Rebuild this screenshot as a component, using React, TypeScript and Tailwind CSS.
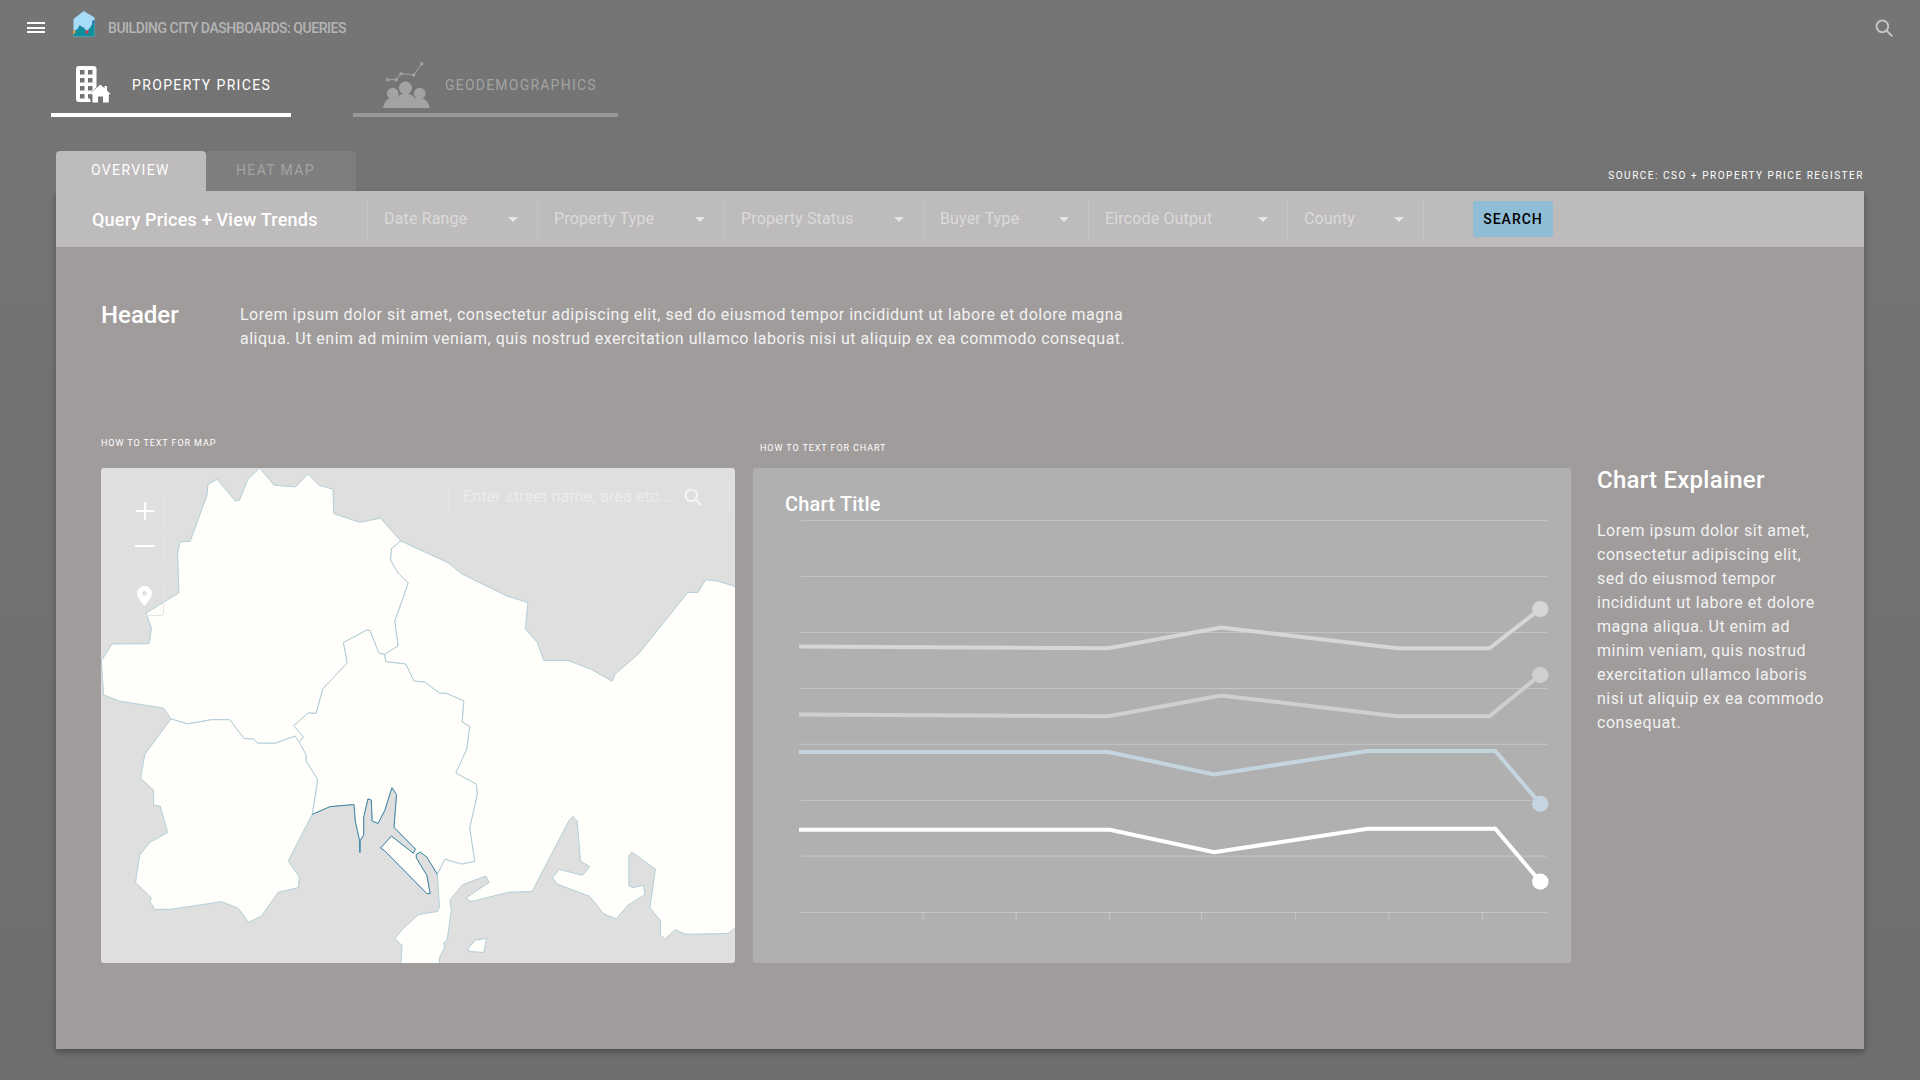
const filters = [
  { label: "Date Range", width: "w-[170px]" },
  { label: "Property Type", width: "w-[187px]" },
  { label: "Property Status", width: "w-[199px]" },
  { label: "Buyer Type", width: "w-[165px]" },
  { label: "Eircode Output", width: "w-[199px]" },
  { label: "County", width: "w-[136px]" },
];

const explainer =
  "Lorem ipsum dolor sit amet, consectetur adipiscing elit, sed do eiusmod tempor incididunt ut labore et dolore magna aliqua. Ut enim ad minim veniam, quis nostrud exercitation ullamco laboris nisi ut aliquip ex ea commodo consequat.";

const landNorth =
  "403,108 437,157 488,162 517,125 545,158 577,168 579,238 640,263 690,251 738,316 716,338 714,372 732,408 756,436 724,545 732,615 700,640 686,636 665,572 658,570 602,606 611,664 553,738 537,808 518,807 484,843 507,875 497,890 487,873 440,893 398,893 388,881 366,880 332,826 288,826 232,838 192,824 175,793 70,773 32,755 27,658 52,610 140,609 146,566 133,522 211,464 208,350 214,318 238,317 278,185 280,155 302,140 345,202 355,200 375,140";
const landSouthWest =
  "192,824 232,838 288,826 332,826 366,880 388,881 398,893 440,893 487,873 497,890 513,925 514,945 541,997 528,1096 500,1160 471,1229 497,1275 495,1305 447,1318 408,1385 377,1404 352,1364 313,1345 190,1367 154,1367 142,1345 146,1335 108,1290 118,1212 142,1176 184,1148 167,1073 151,1070 151,1027 120,993 130,925";
const harbour =
  "528,1096 570,1074 627,1068 630,1115 640,1170 641,1205 642,1170 650,1155 650,1105 660,1052 668,1055 670,1115 684,1122 700,1085 717,1020 728,1040 722,1133 773,1195 768,1207 716,1158 690,1192 700,1200 800,1322 808,1322 800,1270 775,1220 775,1210 785,1204 800,1218 825,1267";
const landCentre =
  "602,606 658,570 665,572 686,636 700,640 702,660 750,667 770,716 795,718 830,750 845,750 888,772 884,832 902,845 895,910 869,978 918,1010 920,1040 902,1135 914,1230 882,1238 843,1224 825,1267 800,1218 785,1204 775,1210 775,1220 800,1270 808,1322 800,1322 700,1200 690,1192 716,1158 768,1207 773,1195 722,1133 728,1040 717,1020 700,1085 684,1122 670,1115 668,1055 660,1052 650,1105 650,1155 642,1170 641,1205 640,1170 630,1115 627,1068 570,1074 528,1096 541,997 514,945 513,925 497,890 507,875 484,843 518,807 537,808 553,738 611,664";
const landEast =
  "738,316 850,378 883,410 990,473 1040,492 1034,567 1062,605 1078,657 1135,657 1190,682 1240,716 1248,695 1303,638 1420,463 1444,463 1462,427 1490,430 1532,446 1540,446 1540,1420 1532,1420 1515,1436 1415,1438 1390,1425 1365,1452 1355,1440 1355,1400 1330,1362 1343,1252 1287,1204 1280,1215 1280,1300 1290,1305 1315,1298 1318,1325 1278,1355 1250,1394 1220,1380 1187,1330 1110,1295 1098,1277 1115,1253 1170,1270 1187,1245 1165,1230 1157,1115 1147,1102 1137,1115 1050,1316 995,1318 905,1345 892,1335 948,1290 940,1272 885,1297 855,1340 858,1370 848,1455 840,1462 842,1475 830,1505 830,1530 738,1530 741,1470 724,1450 745,1420 780,1382 825,1373 830,1360 825,1267 843,1224 882,1238 914,1230 902,1135 920,1040 918,1010 869,978 895,910 902,845 884,832 888,772 845,750 830,750 795,718 770,716 750,667 702,660 700,640 732,615 724,545 756,436 732,408 714,372 716,338";
const island = "915,1455 942,1450 935,1490 900,1487 898,1478";

const gridRows = [258, 417, 577, 737, 896, 1056, 1215, 1376];
const ticks = [327, 503, 679, 853, 1031, 1207, 1384];
const series = [
  { color: "#d6d6d6", points: "93,617 677,622 890,563 1222,622 1397,622 1493,510", cy: 510 },
  { color: "#cfcfcf", points: "93,811 677,816 890,757 1222,816 1397,816 1493,698", cy: 698 },
  { color: "#c5d5df", points: "93,918 677,918 877,982 1167,915 1408,915 1493,1066", cy: 1066 },
  { color: "#ffffff", points: "93,1140 680,1140 877,1204 1167,1137 1408,1137 1493,1288", cy: 1288 },
];

function Logo() {
  return (
    <svg width="22" height="26" viewBox="0 0 22 26">
      <path d="M10.7 0 L21.5 6.5 L21.5 25.5 L0.5 25.5 L0.5 8 Z" fill="#a6dcf8" />
      <path d="M0.5 25.5 L0.5 20.5 Q4.5 19.5 6.7 15.5 Q10.5 15.5 14 20.7 Q18 17 20.7 10.7 L21.5 10.7 L21.5 25.5 Z" fill="#0f8f9e" />
      <path d="M0.5 20.5 Q4.5 19.5 6.7 15.5 Q10.5 15.5 14 20.7 Q18 17 20.7 10.7" fill="none" stroke="#2b7fa8" strokeWidth="0.8" />
      <circle cx="6.9" cy="15.8" r="1.3" fill="#2b7fa8" />
      <circle cx="0.9" cy="21" r="1.6" fill="#f0a92c" />
      <circle cx="14" cy="21" r="1.7" fill="#d8344f" />
      <circle cx="20.5" cy="10.7" r="1.5" fill="#2a6fb5" />
    </svg>
  );
}

function BuildingIcon() {
  return (
    <svg width="35" height="37" viewBox="0 0 35 37">
      <rect x="0" y="0" width="20.5" height="36" rx="3" fill="#ffffff" />
      {[4, 12, 20, 28].map((y) =>
        [4, 12].map((x) => <rect key={`${x}-${y}`} x={x} y={y} width="4.5" height="4.5" fill="#737373" />),
      )}
      <path d="M24.5 17 L36 29 L33.5 37 L15 37 L13 29 Z" fill="#737373" />
      <path d="M24.3 18.5 L28.5 22.3 L28.5 20 L31 20 L31 24.6 L34.8 28.3 L32.8 28.3 L32.8 36.5 L27 36.5 L27 30.5 L22 30.5 L22 36.5 L16.5 36.5 L16.5 28.3 L13.6 28.3 Z" fill="#ffffff" />
    </svg>
  );
}

function GeoIcon() {
  return (
    <svg width="47" height="46" viewBox="0 0 47 46" fill="#a3a3a3">
      <polyline points="4.7,17.7 13.3,17.7 18,11.7 30.7,13 38.7,1.7" fill="none" stroke="#a3a3a3" strokeWidth="1" />
      {[
        [4.7, 17.7],
        [13.3, 17.7],
        [18, 11.7],
        [30.7, 13],
        [38.7, 1.7],
      ].map(([cx, cy]) => (
        <circle key={cx} cx={cx} cy={cy} r="1.7" />
      ))}
      <circle cx="9.7" cy="31.5" r="5.8" />
      <circle cx="36.7" cy="31.5" r="5.8" />
      <circle cx="22.5" cy="26" r="6.5" />
      <path d="M0 46 Q1.5 37 9 35.5 L14 36 Q16 31.5 22.5 31.5 Q29 31.5 31.5 36 L37 35.5 Q45 37 46.7 46 Z" />
    </svg>
  );
}

function SearchGlyph({ size, color }: { size: number; color: string }) {
  return (
    <svg width={size} height={size} viewBox="0 0 24 24" fill="none" stroke={color} strokeWidth="2.4">
      <circle cx="10" cy="10" r="7" />
      <path d="M15 15 L22 22" />
    </svg>
  );
}

function MapPanel() {
  return (
    <div className="relative h-[495px] w-[634px] overflow-hidden rounded-[3px] bg-[#dfdfdf]">
      <svg className="block h-full w-full" viewBox="26 108 1506 1412" preserveAspectRatio="none">
        {[landNorth, landSouthWest, landCentre, landEast, island].map((points) => (
          <polygon
            key={points.slice(0, 20)}
            points={points}
            fill="#fffefa"
            stroke="#b3ced9"
            strokeWidth="1"
            strokeLinejoin="round"
            vectorEffect="non-scaling-stroke"
          />
        ))}
        <polyline
          points={harbour}
          fill="none"
          stroke="#3f88a4"
          strokeWidth="1"
          strokeLinejoin="round"
          vectorEffect="non-scaling-stroke"
        />
      </svg>

      {/* Map controls */}
      <div className="absolute left-[24px] top-[24px] flex w-[39px] flex-col gap-[13px]">
        <div className="flex h-[71px] flex-col rounded-[3px] border border-[#e3e3e3]">
          <div className="flex h-[36px] items-center justify-center border-b border-[#e3e3e3]">
            <svg width="20" height="20" viewBox="0 0 20 20" stroke="#ffffff" strokeWidth="2">
              <path d="M10 1 V19 M1 10 H19" />
            </svg>
          </div>
          <div className="flex flex-1 items-center justify-center">
            <div className="h-[2px] w-[20px] bg-white" />
          </div>
        </div>
        <div className="flex h-[40px] items-center justify-center rounded-[3px] border border-[#e3e3e3]">
          <svg width="15" height="20" viewBox="0 0 15 20">
            <path
              fillRule="evenodd"
              d="M7.5 0 C3.4 0 0 3.3 0 7.3 C0 12 7.5 20 7.5 20 C7.5 20 15 12 15 7.3 C15 3.3 11.6 0 7.5 0 Z M7.5 5 A2.3 2.3 0 1 1 7.5 9.6 A2.3 2.3 0 1 1 7.5 5 Z"
              fill="#ffffff"
            />
          </svg>
        </div>
      </div>

      <div className="absolute left-[347px] top-[14px] flex h-[32px] w-[281px] items-center border border-[#e3e3e3] pl-[14px] pb-[2px]">
        <span className="text-[16px] tracking-[0.2px] text-[#ececec]">Enter street name, area etc...</span>
        <span className="ml-[11px] flex">
          <SearchGlyph size={20} color="#f4f4f4" />
        </span>
      </div>
    </div>
  );
}

function ChartPanel() {
  return (
    <div className="flex h-[495px] w-[818px] flex-col rounded-[3px] bg-[#b0b0b0]">
      <h3 className="pl-[32px] pt-[23px] pb-[1px] text-[20px] font-medium leading-[27px] tracking-[0.2px] text-white">Chart Title</h3>
      <svg className="block h-[444px] w-full" viewBox="6 253.4 1545 1266.6" preserveAspectRatio="none">
        {gridRows.map((y) => (
          <line key={y} x1="96" x2="1506" y1={y} y2={y} stroke="#c6c6c6" strokeWidth="1" vectorEffect="non-scaling-stroke" />
        ))}
        {ticks.map((x) => (
          <line key={x} x1={x} x2={x} y1="1376" y2="1398" stroke="#c6c6c6" strokeWidth="1" vectorEffect="non-scaling-stroke" />
        ))}
        {series.map((s) => (
          <g key={s.cy}>
            <polyline points={s.points} fill="none" stroke={s.color} strokeWidth="4" vectorEffect="non-scaling-stroke" />
            <ellipse cx="1493" cy={s.cy} rx="15.5" ry="23" fill={s.color} />
          </g>
        ))}
      </svg>
    </div>
  );
}

export default function App() {
  return (
    <div className="h-[1080px] w-[1920px] overflow-hidden bg-gradient-to-b from-[#757575] to-[#6e6e6e] font-[Roboto,sans-serif]">
      {/* Top bar */}
      <div className="flex h-[45px] items-center pl-[27px] pr-[26px] pt-[10px]">
        <div className="flex w-[18px] flex-col gap-[2.5px]">
          <div className="h-[2px] bg-white" />
          <div className="h-[2px] bg-white" />
          <div className="h-[2px] bg-white" />
        </div>
        <div className="ml-[28px] mb-[8px] flex">
          <Logo />
        </div>
        <span className="ml-[13px] mt-[1px] text-[14px] font-medium tracking-[-0.45px] text-[#b5b5b5]">
          BUILDING CITY DASHBOARDS: QUERIES
        </span>
        <div className="ml-auto flex">
          <SearchGlyph size={20} color="#c4c4c4" />
        </div>
      </div>

      {/* Section tabs */}
      <div className="flex h-[72px] pl-[51px]">
        <div className="flex w-[240px] items-center border-b-4 border-white pl-[25px] pt-[12px]">
          <div className="flex pb-[2px]">
            <BuildingIcon />
          </div>
          <span className="ml-[21px] text-[14px] tracking-[1.35px] text-white">PROPERTY PRICES</span>
        </div>
        <div className="ml-[62px] flex w-[265px] items-center border-b-4 border-[#999999] pl-[30px] pt-[12px]">
          <GeoIcon />
          <span className="ml-[15px] text-[14px] tracking-[1.22px] text-[#a3a3a3]">GEODEMOGRAPHICS</span>
        </div>
      </div>

      <div className="px-[56px] pt-[34px]">
        {/* Sub tabs and source */}
        <div className="flex items-end">
          <div className="flex h-[40px] w-[150px] items-center rounded-t-[4px] bg-[#bdbbbb] pb-[1px] pl-[35px] text-[14px] tracking-[1.35px] text-white">
            OVERVIEW
          </div>
          <div className="flex h-[40px] w-[150px] items-center rounded-t-[4px] bg-[#7e7e7e] pb-[1px] pl-[30px] text-[14px] tracking-[1.35px] text-[#a3a3a3]">
            HEAT MAP
          </div>
          <span className="ml-auto mb-[9px] text-[10px] leading-[12px] tracking-[1.53px] text-white">
            SOURCE: CSO + PROPERTY PRICE REGISTER
          </span>
        </div>

        <div className="shadow-[0_3px_6px_rgba(0,0,0,0.3)]">
          {/* Filter bar */}
          <div className="flex h-[56px] items-center bg-[#bdbbbb] pl-[36px]">
            <span className="w-[275px] text-[18px] font-medium tracking-[0.2px] text-white">Query Prices + View Trends</span>
            <div className="flex h-[44px] border-l border-[#c6c4c4]">
              {filters.map((f) => (
                <div
                  key={f.label}
                  className={`${f.width} flex items-center justify-between border-r border-[#c6c4c4] pl-[16px] pr-[19px]`}
                >
                  <span className="text-[16px] tracking-[0.15px] text-[#dbdada]">{f.label}</span>
                  <span className="h-0 w-0 border-x-[5px] border-t-[5px] border-x-transparent border-t-[#e6e6e6]" />
                </div>
              ))}
            </div>
            <button className="ml-[49px] flex h-[36px] w-[80px] items-center justify-center rounded-[3px] bg-[#90bdd6] text-[14px] font-medium tracking-[1px] text-black">
              SEARCH
            </button>
          </div>

          {/* Body */}
          <div className="h-[802px] bg-[#a09c9b] pl-[45px] pt-[56px]">
            <div className="flex h-[48px]">
              <h2 className="w-[139px] text-[24px] font-medium leading-[24px] text-white">Header</h2>
              <p className="w-[900px] text-[16px] leading-[24px] tracking-[0.5px] text-[#f2f2f2]">
                Lorem ipsum dolor sit amet, consectetur adipiscing elit, sed do eiusmod tempor incididunt ut labore et dolore magna
                <br />
                aliqua. Ut enim ad minim veniam, quis nostrud exercitation ullamco laboris nisi ut aliquip ex ea commodo consequat.
              </p>
            </div>

            <div className="mt-[86px] flex items-end">
              <div>
                <p className="mb-[19px] text-[9px] leading-[12px] tracking-[0.9px] text-white">HOW TO TEXT FOR MAP</p>
                <MapPanel />
              </div>
              <div className="ml-[18px]">
                <p className="mb-[14px] ml-[7px] text-[9px] leading-[12px] tracking-[0.9px] text-white">
                  HOW TO TEXT FOR CHART
                </p>
                <ChartPanel />
              </div>
              <div className="ml-[26px] h-[495px] w-[230px]">
                <h3 className="text-[24px] font-medium leading-[24px] tracking-[0.25px] text-white">Chart Explainer</h3>
                <p className="mt-[27px] text-[16px] leading-[24px] tracking-[0.5px] text-[#f2f2f2]">{explainer}</p>
              </div>
            </div>
          </div>
        </div>
      </div>
    </div>
  );
}
